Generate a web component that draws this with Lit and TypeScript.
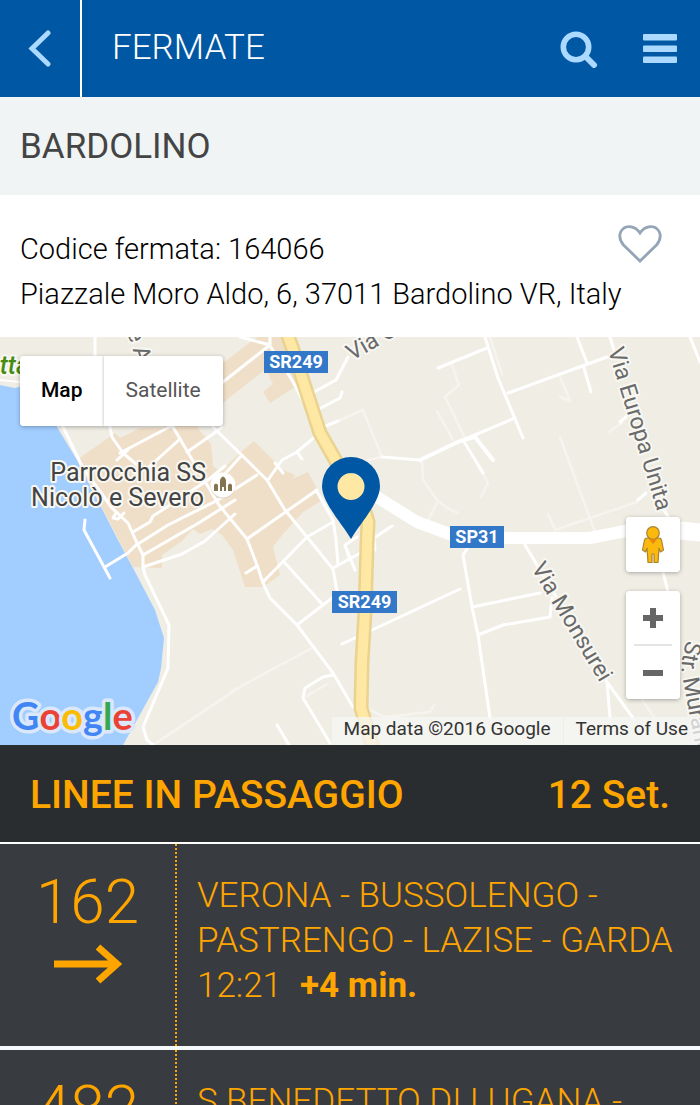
import { LitElement, html, svg, css } from "lit";
import { customElement, property, state } from "lit/decorators.js";
import { classMap } from "lit/directives/class-map.js";

interface Departure {
  line: string;
  route: string;
  time?: string;
  delay?: string;
}

const departures: Departure[] = [
  { line: "162", route: "VERONA - BUSSOLENGO - PASTRENGO - LAZISE - GARDA", time: "12:21", delay: "+4 min." },
  { line: "482", route: "S.BENEDETTO DI LUGANA -" },
];

const townBlocks = [
  "M163,427 L223,363 L257,337 L287,337 L300,384 L270,403 L263,392 L273,384 L266,369 L230,397 L197,427 Z",
  "M77,460 L115,433 L120,438 L140,428 L197,427 L211,444 L213,466 L220,472 L240,453 L254,441 L283,470 L295,475 L292,479 L308,472 L323,500 L303,512 L283,534 L273,547 L280,575 L263,587 L245,587 L233,550 L222,535 L212,529 L200,534 L193,529 L182,541 L162,555 L162,568 L133,567 Z",
];

const streets = [
  "M63,427 L83,468 L112,508 L128,523 L137,543 L143,555 L143,567 L145,575 L169,625 L168,668 L143,727 L147,740 L153,745",
  "M95,337 V356",
  "M110,427 L112,437 L123,453 L143,470 M117,460 L128,450",
  "M173,427 L190,456 L219,505 L247,539 L257,565 L263,583 L270,598 L297,625 L333,673 L353,707 L358,709",
  "M187,452 L213,434 L222,427 M120,453 L173,425 M150,466 L180,439",
  "M213,427 L267,480 L285,510 L307,537 L333,569 L337,592 M242,455 L222,477",
  "M133,532 L150,522 L153,516 L208,480 L225,466",
  "M116,513 L113,518 L118,519 L124,513",
  "M138,544 L168,525 L218,500 L257,475 M143,555 L197,524 L235,500",
  "M143,567 L182,554 L205,541 L235,514",
  "M240,337 L270,345 L223,382 M270,337 L270,346 L292,380 L312,417",
  "M317,435 L297,452 L282,460 L268,480 M275,463 L283,473 M297,452 L302,459",
  "M312,393 L336,380 L348,357 M317,410 L340,398 L342,392 M323,427 L338,421",
  "M382,457 L420,460",
  "M463,440 L515,418 M485,337 L498,378 L523,438 M438,368 L487,348 M508,393 L607,357 M577,337 L587,363 M584,368 L591,392 M610,337 L614,350 M463,440 L483,473 M690,337 L700,362",
  "M247,539 L317,490 M316,490 L333,520 L336,540 L338,565 M333,522 L307,537 L263,582 M285,563 L323,605 L297,625 M323,605 L332,598",
  "M333,568 L364,551 M345,545 L357,537 M345,545 L355,570 M350,560 L345,545 M375,550 L374,538 L392,526",
  "M333,675 L323,677 L305,688 L303,698 L330,743 M277,725 L289,745 M342,644 L460,589 M246,573 L257,566",
  "M85,520 L84,530 L110,578 M105,567 L128,553 L138,543",
  "M525,545 L607,682 L633,718 M607,682 L610,718 M467,549 L463,555 L472,607 L478,635 L490,718 M472,607 L540,593 M478,635 L503,625 L550,617 L552,598 M663,572 L668,592",
  "M638,500 L646,493 M620,422 L628,415 M664,510 L670,520",
];

const lanes = [
  "M338,421 L363,410 L382,457 L368,460 M422,460 L423,480 L437,500 L447,508 L458,513 M437,503 L428,520",
  "M452,365 L459,385 L445,397 L466,440 M437,411 L453,440 M490,337 L502,374 M560,397 L570,401",
  "M560,437 L595,532 M548,514 L555,530 L637,502 M483,473 L488,483 L481,497 M560,377 L570,400 M609,432 L622,423",
  "M153,745 L240,687 M230,692 L312,648 M307,696 L327,684 M366,708 L385,717 L430,712 L434,705 M642,700 L656,720",
];

const mainRoad =
  "M287,333 L293,350 L305,387 L320,433 L337,463 L351,485 L363,505 L368,522 L367,545 L365,612 L362,662 L361,708 L373,748";

@customElement("stop-map")
export class StopMap extends LitElement {
  @state() private view: "map" | "satellite" = "map";

  static styles = css`
    :host {
      display: block;
      position: relative;
      overflow: hidden;
      background: #efede4;
      font-family: Roboto, sans-serif;
    }
    .canvas {
      display: block;
      width: 100%;
      height: 408px;
    }
    .label {
      font-size: 23px;
      fill: #6a6a6a;
      stroke: #f8f7f2;
      stroke-width: 4px;
      stroke-linejoin: round;
      paint-order: stroke;
    }
    .poi {
      font-size: 25px;
      fill: #444;
    }
    .park {
      font-size: 25px;
      font-style: italic;
      font-weight: 500;
      fill: #458c12;
    }
    .shield {
      font-size: 18px;
      font-weight: 700;
      fill: #fff;
      text-anchor: middle;
    }
    .logo {
      font-family: Lato, sans-serif;
      font-size: 38px;
      font-weight: 700;
      stroke: #dbe8fb;
      stroke-width: 7px;
      stroke-linejoin: round;
      paint-order: stroke;
    }
    button {
      margin: 0;
      padding: 0;
      border: 0;
      background: #fff;
      font: inherit;
      cursor: pointer;
    }
    .card {
      position: absolute;
      display: flex;
      overflow: hidden;
      border-radius: 4px;
      background: #fff;
      box-shadow: 0 1px 4px rgba(0, 0, 0, 0.3);
    }
    .types {
      top: 19px;
      left: 20px;
      height: 70px;
    }
    .type {
      padding: 0 21px 3px;
      font-size: 21px;
      color: #565656;
    }
    .type + .type {
      padding: 0 22px 3px;
      box-shadow: 0 0 3px rgba(0, 0, 0, 0.3);
    }
    .type.active {
      font-weight: 500;
      color: #000;
    }
    .controls {
      right: 20px;
      width: 54px;
      flex-direction: column;
    }
    .street {
      top: 180px;
    }
    .zoom {
      top: 254px;
    }
    .square {
      display: flex;
      align-items: center;
      justify-content: center;
      height: 55px;
    }
    .zoom .square {
      height: 53px;
    }
    .rule {
      height: 2px;
      margin: 0 8px;
      background: #e4e4e4;
    }
    .credits {
      position: absolute;
      right: 0;
      bottom: 0;
      display: flex;
      gap: 1px;
      font-size: 19px;
      line-height: 24px;
      color: #333;
    }
    .credit {
      padding: 0 12px 4px;
      background: rgba(245, 245, 245, 0.75);
      color: inherit;
      text-decoration: none;
    }
  `;

  private shield(x: number, y: number, width: number, name: string) {
    return svg`
      <rect x=${x} y=${y} width=${width} height="22" fill="#3377c8"></rect>
      <text class="shield" x=${x + width / 2} y=${y + 17}>${name}</text>`;
  }

  render() {
    return html`
      <svg class="canvas" viewBox="0 337 700 408" preserveAspectRatio="xMidYMid slice" role="img" aria-label="Mappa">
        <rect y="337" width="700" height="408" fill="#efede4"></rect>
        <path fill="#a1ceff" d="M0,385 L15,388 L30,384 L45,400 L57,427 L77,460 L118,540 L133,568 L155,610 L164,638 L161,668 L158,682 L123,745 H0 Z"></path>
        ${townBlocks.map((d) => svg`<path d=${d} fill="#f0dfc8"></path>`)}
        <g fill="none" stroke="#f7f4f0" stroke-width="2.5" stroke-linecap="round" stroke-linejoin="round">
          ${lanes.map((d) => svg`<path d=${d}></path>`)}
        </g>
        <g fill="none" stroke="#fff" stroke-width="3" stroke-linecap="round" stroke-linejoin="round">
          ${streets.map((d) => svg`<path d=${d}></path>`)}
          <path stroke-width="2" d="M0,380 L20,382"></path>
          <path stroke-width="4" d="M420,460 L460,441 L475,437 L493,460"></path>
          <path stroke-width="12" d="M352,484 L377,497 L417,522 L455,536 L510,538 L590,538 L640,528 L700,533"></path>
          <path stroke-width="18" d="M676,530 L704,533"></path>
        </g>
        <path d=${mainRoad} fill="none" stroke="#ead28f" stroke-width="15"></path>
        <path d=${mainRoad} fill="none" stroke="#ffe7a4" stroke-width="10"></path>
        <circle cx="351" cy="488" r="14" fill="#ffe7a4"></circle>

        ${this.shield(264, 351, 64, "SR249")} ${this.shield(332, 591, 65, "SR249")} ${this.shield(450, 526, 54, "SP31")}

        <text class="label park" x="-14" y="374">otta</text>
        <text class="label" transform="translate(127 332) rotate(72)">e A</text>
        <text class="label" transform="translate(352 361) rotate(-30)">Via C</text>
        <text class="label" transform="translate(608 350) rotate(73)">Via Europa Unita</text>
        <text class="label" transform="translate(531 568) rotate(59)">Via Monsurei</text>
        <path id="murano" d="M687,640 C682,655 680,668 683,680 L698,760" fill="none"></path>
        <text class="label"><textPath href="#murano">Str. Murano</textPath></text>
        <text class="label poi" x="206" y="481" text-anchor="end">Parrocchia SS</text>
        <text class="label poi" x="204" y="506" text-anchor="end">Nicolò e Severo</text>
        <circle cx="223" cy="486" r="12.5" fill="#d8d2c4"></circle>
        <circle cx="223" cy="485" r="12.5" fill="#fff"></circle>
        <path fill="#857450" d="M214,491 V485 Q216,482 218,485 V491 Z M220,491 V480 L221,478 Q223,475 225,478 L226,480 V491 H224 V487 H222 V491 Z M228,491 V485 Q230,482 232,485 V491 Z"></path>

        <path fill="#0057a3" fill-rule="evenodd" d="M351,539 C344,526 322,503 322,486 A29,29 0 0 1 380,486 C380,503 358,526 351,539 Z M351,473 A13.5,13.5 0 1 0 351,500 A13.5,13.5 0 1 0 351,473 Z"></path>

        <text class="logo" x="12" y="730"><tspan fill="#4285f4">G</tspan><tspan fill="#ea4335">o</tspan><tspan fill="#fbbc05">o</tspan><tspan fill="#4285f4">g</tspan><tspan fill="#34a853">l</tspan><tspan fill="#ea4335">e</tspan></text>
      </svg>

      <div class="card types">
        <button class=${classMap({ type: true, active: this.view === "map" })} @click=${() => (this.view = "map")}>Map</button>
        <button class=${classMap({ type: true, active: this.view === "satellite" })} @click=${() => (this.view = "satellite")}>Satellite</button>
      </div>
      <div class="card controls street">
        <button class="square" aria-label="Street View">
          <svg width="24" height="40" viewBox="0 0 24 40">
            <g fill="#fbb90d" stroke="#a98532" stroke-width="1.2" stroke-linejoin="round">
              <path d="M6,13 H18 Q20,13 20.500,15 L22.500,25 L19.500,27 L18,23 L17,37.500 H13 V29 H11 V37.500 H7 L6,23 L4.500,27 L1.500,25 L3.500,15 Q4,13 6,13 Z"></path>
              <circle cx="12" cy="8" r="6.300"></circle>
            </g>
            <path fill="#e8830c" d="M8,14 H16 L12,19 Z"></path>
          </svg>
        </button>
      </div>
      <div class="card controls zoom">
        <button class="square" aria-label="Zoom in">
          <svg width="20" height="20" viewBox="0 0 20 20"><path d="M10,0 V20 M0,10 H20" stroke="#666" stroke-width="6"></path></svg>
        </button>
        <div class="rule"></div>
        <button class="square" aria-label="Zoom out">
          <svg width="20" height="20" viewBox="0 0 20 20"><path d="M0,10 H20" stroke="#666" stroke-width="6"></path></svg>
        </button>
      </div>
      <div class="credits">
        <span class="credit">Map data ©2016 Google</span>
        <a class="credit" href="#terms">Terms of Use</a>
      </div>
    `;
  }
}

@customElement("line-row")
export class LineRow extends LitElement {
  @property({ attribute: false }) departure!: Departure;

  static styles = css`
    :host {
      display: flex;
      min-height: 202px;
      background: #383c40;
      color: #ffa500;
      font-family: Roboto, sans-serif;
      font-weight: 300;
    }
    .line {
      display: flex;
      flex: none;
      flex-direction: column;
      align-items: center;
      gap: 10px;
      width: 175px;
      padding-top: 26px;
      border-right: 2px dotted #ffa500;
      font-size: 62px;
      line-height: 64px;
    }
    .info {
      flex: 1;
      padding: 29px 20px;
      font-size: 35px;
      line-height: 45px;
    }
    .when {
      display: flex;
      gap: 18px;
    }
    .delay {
      font-weight: 700;
    }
  `;

  render() {
    const { line, route, time, delay } = this.departure;
    return html`
      <div class="line">
        <span>${line}</span>
        <svg width="70" height="40" viewBox="0 0 70 40" aria-hidden="true">
          <path d="M1,20 H64 M45,3 L64,20 L45,37" fill="none" stroke="#ffa500" stroke-width="7"></path>
        </svg>
      </div>
      <div class="info">
        <div>${route}</div>
        ${time ? html`<div class="when"><span>${time}</span><span class="delay">${delay}</span></div>` : ""}
      </div>
    `;
  }
}

@customElement("app-root")
export class AppRoot extends LitElement {
  @state() private favourite = false;

  static styles = css`
    :host {
      display: flex;
      flex-direction: column;
      height: 100vh;
      overflow: hidden;
      background: #fff;
      font-family: Roboto, sans-serif;
    }
    h1,
    h2,
    p {
      margin: 0;
    }
    button {
      display: flex;
      align-items: center;
      justify-content: center;
      margin: 0;
      padding: 0;
      border: 0;
      background: none;
      cursor: pointer;
    }
    .bar {
      display: flex;
      flex: none;
      height: 97px;
      background: #0057a3;
      color: #fff;
    }
    .back {
      width: 82px;
      border-right: 2px solid #fff;
    }
    .heading {
      flex: 1;
      padding-left: 30px;
      font-size: 35px;
      font-weight: 300;
      line-height: 95px;
    }
    .tool {
      width: 80px;
    }
    .stop {
      flex: none;
      padding: 2px 20px 0;
      background: #f0f4f5;
      color: #444;
      font-size: 35px;
      font-weight: 400;
      line-height: 96px;
    }
    .details {
      display: flex;
      flex: none;
      flex-wrap: wrap;
      justify-content: space-between;
      padding: 32px 20px 20px;
      font-size: 29px;
      font-weight: 300;
      line-height: 45px;
      color: #000;
    }
    .address {
      flex-basis: 100%;
    }
    .fav {
      align-self: flex-start;
      margin-right: 18px;
    }
    .fav svg {
      overflow: visible;
    }
    .map {
      flex: none;
    }
    .lines {
      display: flex;
      flex: none;
      justify-content: space-between;
      padding: 3px 30px 0;
      background: #292d2f;
      color: #ffa500;
      font-size: 39px;
      font-weight: 500;
      line-height: 94px;
    }
    .lines h2 {
      font: inherit;
    }
    .list {
      display: flex;
      flex: 1;
      flex-direction: column;
      gap: 4px;
      min-height: 0;
      overflow-y: auto;
      scrollbar-width: none;
      border-top: 2px solid #fff;
      background: #f5f9fb;
    }
    .row {
      flex: none;
    }
  `;

  render() {
    return html`
      <header class="bar">
        <button class="back" aria-label="Indietro">
          <svg width="24" height="38" viewBox="0 0 24 38">
            <path d="M20,3 L4,18.500 L20,34" fill="none" stroke="#acd9ff" stroke-width="5" stroke-linecap="round" stroke-linejoin="miter"></path>
          </svg>
        </button>
        <h1 class="heading">FERMATE</h1>
        <button class="tool" aria-label="Cerca">
          <svg width="40" height="38" viewBox="0 0 40 38" fill="none" stroke="#acd9ff">
            <circle cx="16" cy="17" r="12.700" stroke-width="5.600"></circle>
            <path d="M26,27 L34,35" stroke-width="6" stroke-linecap="round"></path>
          </svg>
        </button>
        <button class="tool" aria-label="Menu">
          <svg width="34" height="30" viewBox="0 0 34 30" fill="#acd9ff">
            <rect width="34" height="6.500" rx="1"></rect>
            <rect y="11.500" width="34" height="6.500" rx="1"></rect>
            <rect y="22.500" width="34" height="6.500" rx="1"></rect>
          </svg>
        </button>
      </header>
      <h2 class="stop">BARDOLINO</h2>
      <section class="details">
        <p>Codice fermata: 164066</p>
        <button class="fav" aria-label="Preferiti" aria-pressed=${this.favourite} @click=${() => (this.favourite = !this.favourite)}>
          <svg width="44" height="36" viewBox="0 2 44 36">
            <path d="M22,8 C27,0.500 35,1 38,3 C44,7.500 43,15 38.500,20 L22,36 L5.500,20 C1,15 0,7.500 6,3 C9,1 17,0.500 22,8 Z" fill=${this.favourite ? "#93a5b7" : "none"} stroke="#93a5b7" stroke-width="2.800"></path>
          </svg>
        </button>
        <p class="address">Piazzale Moro Aldo, 6, 37011 Bardolino VR, Italy</p>
      </section>
      <stop-map class="map"></stop-map>
      <div class="lines">
        <h2>LINEE IN PASSAGGIO</h2>
        <span>12 Set.</span>
      </div>
      <main class="list">
        ${departures.map((d) => html`<line-row class="row" .departure=${d}></line-row>`)}
      </main>
    `;
  }
}
